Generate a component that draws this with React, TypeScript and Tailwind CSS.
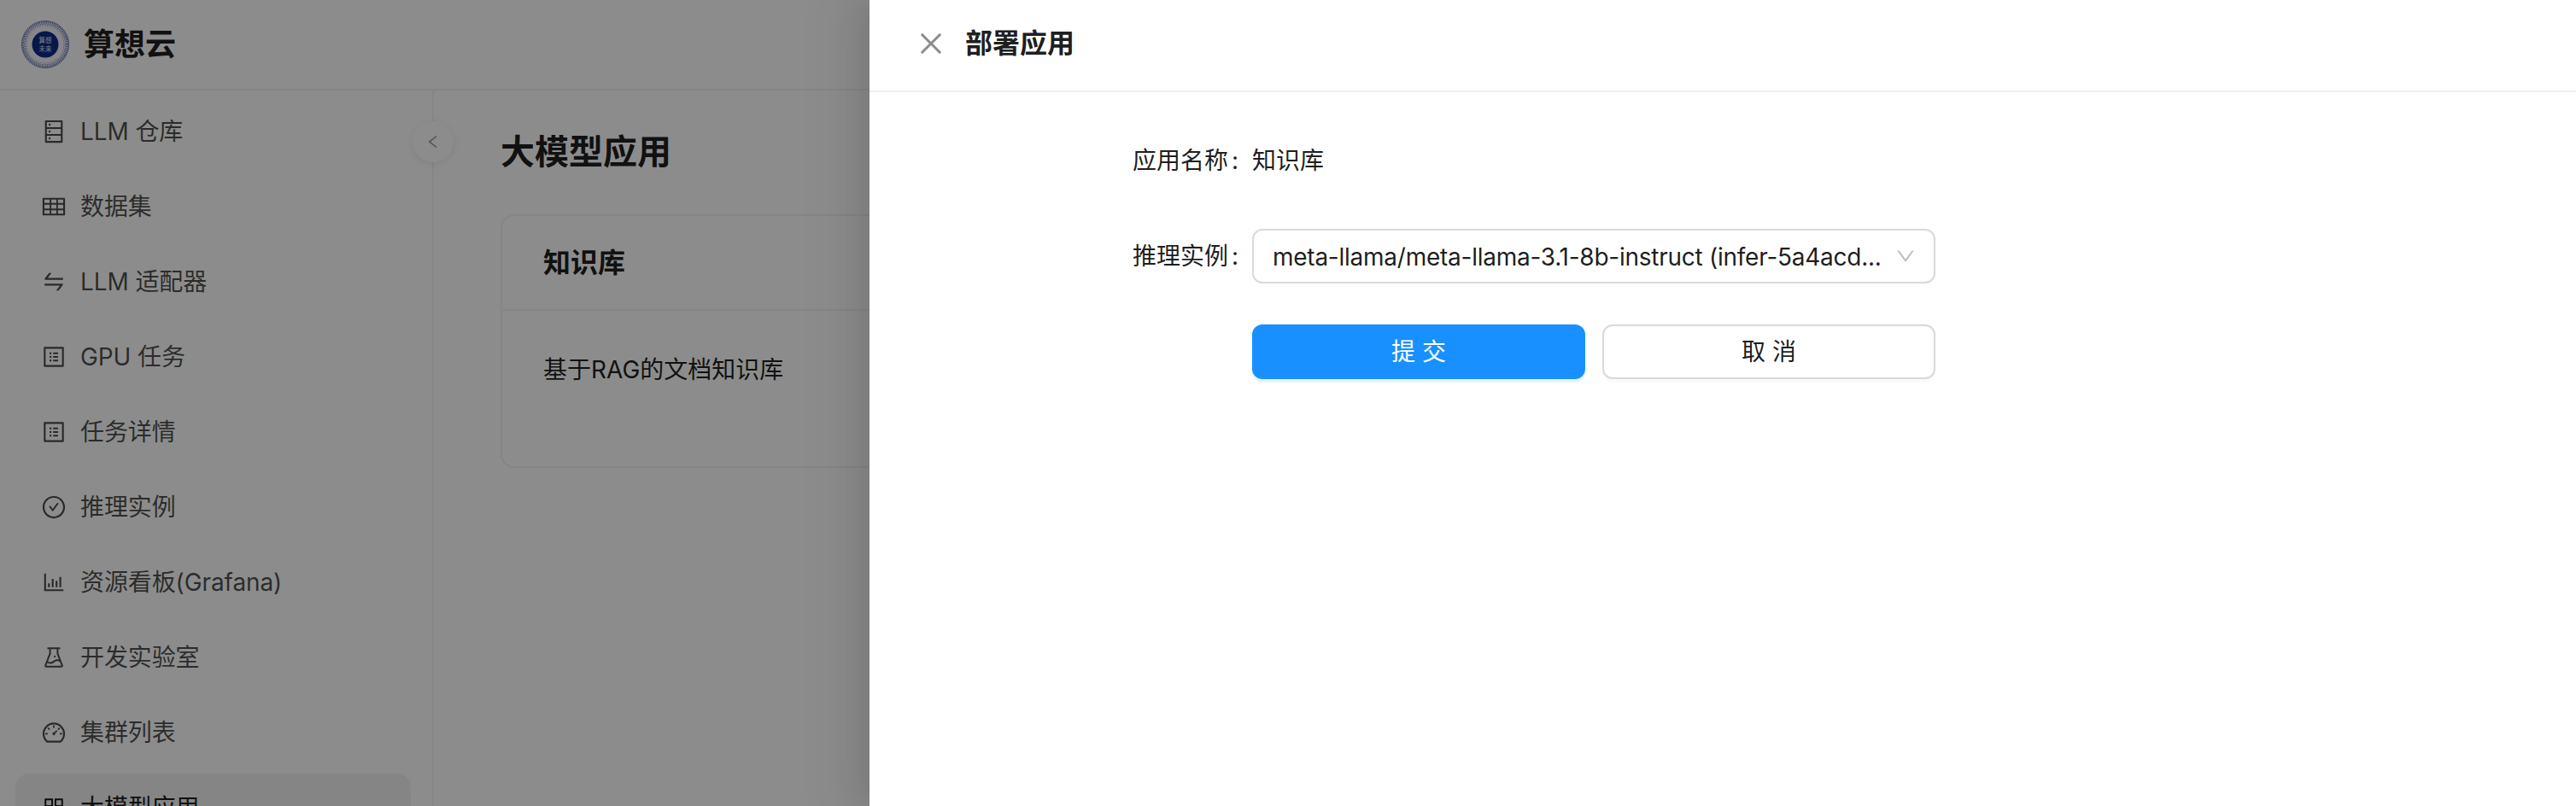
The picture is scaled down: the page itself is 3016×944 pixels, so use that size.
import {
  AiOutlineAppstore,
  AiOutlineBarChart,
  AiOutlineCheckCircle,
  AiOutlineClose,
  AiOutlineDashboard,
  AiOutlineDatabase,
  AiOutlineDown,
  AiOutlineExperiment,
  AiOutlineLeft,
  AiOutlineProfile,
  AiOutlineSwap,
  AiOutlineTable,
} from "react-icons/ai";

const menu = [
  { label: "LLM 仓库", icon: AiOutlineDatabase },
  { label: "数据集", icon: AiOutlineTable },
  { label: "LLM 适配器", icon: AiOutlineSwap },
  { label: "GPU 任务", icon: AiOutlineProfile },
  { label: "任务详情", icon: AiOutlineProfile },
  { label: "推理实例", icon: AiOutlineCheckCircle },
  { label: "资源看板(Grafana)", icon: AiOutlineBarChart },
  { label: "开发实验室", icon: AiOutlineExperiment },
  { label: "集群列表", icon: AiOutlineDashboard },
  { label: "大模型应用", icon: AiOutlineAppstore, active: true },
];

const Logo = () => (
  <svg width="58" height="58" viewBox="0 0 58 58" className="shrink-0">
    <circle cx="29" cy="29" r="28" fill="#f4f5fa" />
    <circle cx="29" cy="29" r="27.5" fill="none" stroke="#6f7fb8" strokeWidth="1" />
    <circle cx="29" cy="29" r="26" fill="none" stroke="#2d3f8f" strokeWidth="1.5" strokeDasharray="1 1.2" />
    <circle cx="29" cy="29" r="24" fill="none" stroke="#5a6cab" strokeWidth="1.5" strokeDasharray="1 1" />
    <circle cx="29" cy="29" r="22" fill="none" stroke="#8e9ac8" strokeWidth="1" strokeDasharray="1.5 1.5" />
    <circle cx="29" cy="29" r="15.5" fill="#0e2a8a" />
    <text x="29" y="27" textAnchor="middle" fontSize="7.5" fill="#dfe4f5" fontFamily="Noto Sans CJK SC, sans-serif">
      算想
    </text>
    <text x="29" y="37" textAnchor="middle" fontSize="7.5" fill="#dfe4f5" fontFamily="Noto Sans CJK SC, sans-serif">
      未来
    </text>
  </svg>
);

export default function App() {
  return (
    <div className="relative h-[944px] w-[3016px] overflow-hidden bg-white font-['Inter','Noto_Sans_CJK_SC',sans-serif] text-[28px] text-black/90">
      {/* Page behind the mask */}
      <header className="flex h-[106px] items-center gap-[16px] border-b-2 border-black/5 pl-6">
        <Logo />
        <span className="text-[36px] leading-none font-semibold">算想云</span>
      </header>

      <div className="flex">
        <aside className="relative h-[838px] w-[508px] shrink-0 border-r-2 border-black/5">
          <nav className="flex flex-col gap-2 pt-[8px] pr-[25px] pl-[18px]">
            {menu.map(({ label, icon: Icon, active }) => (
              <div
                key={label}
                className={
                  active
                    ? "flex h-20 shrink-0 items-center gap-[16px] rounded-2xl bg-black/5 pl-[30px] text-black/90"
                    : "flex h-20 shrink-0 items-center gap-[16px] rounded-2xl pl-[30px] text-black/70"
                }
              >
                <Icon size={30} className="shrink-0" />
                <span className="tracking-[-0.1px]">{label}</span>
              </div>
            ))}
          </nav>
          <div className="absolute top-[36px] -right-[25px] flex h-12 w-12 items-center justify-center rounded-full bg-white text-black/40 shadow-[0_2px_8px_rgba(0,0,0,0.08)]">
            <AiOutlineLeft size={20} />
          </div>
        </aside>

        <main className="min-w-0 flex-1 pt-[50px] pr-10 pl-[78px]">
          <h1 className="text-[40px] leading-[44px] font-semibold">大模型应用</h1>
          <section className="mt-[51px] h-[297px] rounded-2xl border-2 border-black/5">
            <div className="flex h-[111px] items-center border-b-2 border-black/5 pl-12 text-[32px] font-semibold">
              知识库
            </div>
            <p className="pt-[50px] pl-12 leading-[38px]">基于RAG的文档知识库</p>
          </section>
        </main>
      </div>

      {/* Mask */}
      <div className="absolute inset-0 bg-black/45" />

      {/* Drawer */}
      <aside className="absolute inset-y-0 right-0 left-[1018px] flex flex-col bg-white shadow-[-18px_0_56px_16px_rgba(0,0,0,0.05),-12px_0_32px_0_rgba(0,0,0,0.08)]">
        <div className="flex h-[108px] shrink-0 items-center gap-[22px] border-b-2 border-[#f0f0f0] pb-[5px] pl-[54px]">
          <AiOutlineClose size={36} className="text-black/45" />
          <span className="text-[32px] leading-none font-semibold">部署应用</span>
        </div>

        <form className="flex w-[1248px] flex-col gap-12 pt-12 pl-[308px]">
          <div className="flex h-16 items-center">
            <label className="w-[140px] shrink-0">
              应用名称<span className="ml-1">:</span>
            </label>
            <span>知识库</span>
          </div>

          <div className="flex h-16 items-center">
            <label className="w-[140px] shrink-0">
              推理实例<span className="ml-1">:</span>
            </label>
            <div className="flex h-16 w-[800px] items-center justify-between rounded-xl border-2 border-[#d9d9d9] pr-[20px] pl-[22px]">
              <span className="truncate pt-[2px] tracking-[-0.25px]">
                meta-llama/meta-llama-3.1-8b-instruct (infer-5a4acd...
              </span>
              <AiOutlineDown size={26} className="shrink-0 text-black/25" />
            </div>
          </div>

          <div className="flex gap-5 pl-[140px]">
            <button
              type="button"
              className="h-16 w-[390px] rounded-xl bg-[#1890ff] text-white shadow-[0_4px_0_rgba(5,145,255,0.1)]"
            >
              提 交
            </button>
            <button
              type="button"
              className="h-16 w-[390px] rounded-xl border-2 border-[#d9d9d9] bg-white shadow-[0_4px_0_rgba(0,0,0,0.02)]"
            >
              取 消
            </button>
          </div>
        </form>
      </aside>
    </div>
  );
}
